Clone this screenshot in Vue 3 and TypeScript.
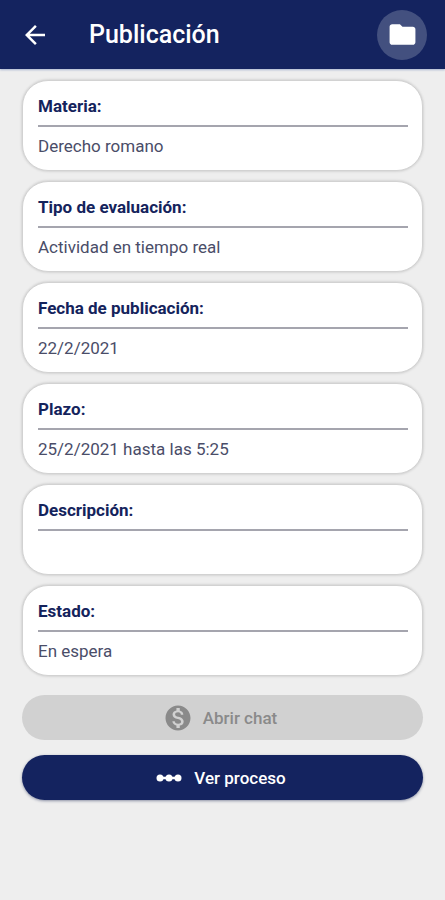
<script setup lang="ts">
interface Field {
  label: string
  value: string
}

const fields: Field[] = [
  { label: 'Materia:', value: 'Derecho romano' },
  { label: 'Tipo de evaluación:', value: 'Actividad en tiempo real' },
  { label: 'Fecha de publicación:', value: '22/2/2021' },
  { label: 'Plazo:', value: '25/2/2021 hasta las 5:25' },
  { label: 'Descripción:', value: '' },
  { label: 'Estado:', value: 'En espera' },
]
</script>

<template>
  <div class="screen">
    <header class="bar">
      <button class="back" type="button" aria-label="Volver">
        <svg viewBox="0 0 24 24" width="30" height="30" aria-hidden="true">
          <path d="M20 11H7.83l5.59-5.59L12 4l-8 8 8 8 1.41-1.41L7.83 13H20v-2z" />
        </svg>
      </button>
      <h1 class="title">Publicación</h1>
      <button class="folder" type="button" aria-label="Archivos">
        <svg viewBox="0 0 24 24" width="31" height="31" aria-hidden="true">
          <path d="M10 4H4c-1.1 0-1.99.9-1.99 2L2 18c0 1.1.9 2 2 2h16c1.1 0 2-.9 2-2V8c0-1.1-.9-2-2-2h-8l-2-2z" />
        </svg>
      </button>
    </header>

    <main class="content">
      <dl class="cards">
        <div v-for="field in fields" :key="field.label" class="card">
          <dt class="label">{{ field.label }}</dt>
          <dd class="value">{{ field.value }}</dd>
        </div>
      </dl>

      <div class="actions">
        <button class="action" type="button" disabled>
          <svg viewBox="0 0 24 24" width="30" height="30" aria-hidden="true">
            <path d="M12 2C6.48 2 2 6.48 2 12s4.48 10 10 10 10-4.48 10-10S17.52 2 12 2zm1.41 16.09V20h-2.67v-1.93c-1.71-.36-3.16-1.46-3.27-3.4h1.96c.1 1.05.82 1.87 2.65 1.87 1.96 0 2.4-.98 2.4-1.59 0-.83-.44-1.61-2.67-2.14-2.48-.6-4.18-1.62-4.18-3.67 0-1.72 1.39-2.84 3.11-3.21V4h2.67v1.95c1.86.45 2.79 1.86 2.85 3.39H14.3c-.05-1.11-.64-1.87-2.22-1.87-1.5 0-2.4.68-2.4 1.64 0 .84.65 1.39 2.67 1.91s4.18 1.39 4.18 3.91c-.01 1.83-1.38 2.83-3.12 3.16z" />
          </svg>
          <span>Abrir chat</span>
        </button>
        <button class="action primary" type="button">
          <svg viewBox="0 0 24 24" width="30" height="30" aria-hidden="true">
            <path d="M4 11h16v2H4z" />
            <circle cx="4.8" cy="12" r="2.8" />
            <circle cx="12" cy="12" r="2.8" />
            <circle cx="19.2" cy="12" r="2.8" />
          </svg>
          <span>Ver proceso</span>
        </button>
      </div>
    </main>
  </div>
</template>

<style>
body {
  background: #eeeeee;
}
</style>

<style scoped>
.screen {
  min-height: 100vh;
  background: #eeeeee;
  color: #14235c;
  font-family: Roboto, sans-serif;
}

svg {
  display: block;
  fill: currentColor;
}

button {
  margin: 0;
  padding: 0;
  border: 0;
  font: inherit;
}

.bar {
  display: flex;
  align-items: center;
  height: 69px;
  padding: 0 18px 0 20px;
  background: #14235f;
  box-shadow: 0 1px 2px #a9b4d0;
  color: #ffffff;
}

.back {
  background: none;
  color: inherit;
}

.title {
  flex: 1;
  margin: 0 0 0 39px;
  font-size: 25px;
  font-weight: 500;
  line-height: 33px;
}

.folder {
  display: grid;
  place-items: center;
  width: 50px;
  height: 50px;
  border-radius: 50%;
  background: #43507f;
  color: inherit;
}

.content {
  padding: 11px 22px 24px;
}

.cards {
  display: grid;
  gap: 10px;
  margin: 0;
}

.card {
  padding: 14px 14px 13px 15px;
  border: 1px solid #d2d2d2;
  border-radius: 26px;
  background: #ffffff;
  box-shadow: 0 0 2px 1px #d6d6d6;
}

.label {
  padding-bottom: 8px;
  border-bottom: 2px solid #a5a5ae;
  font-size: 17px;
  font-weight: 700;
  line-height: 22px;
}

.value {
  min-height: 22px;
  margin: 0;
  padding-top: 8px;
  color: #4a4d68;
  font-size: 17px;
  line-height: 22px;
}

.actions {
  display: grid;
  gap: 15px;
  margin-top: 19px;
}

.action {
  display: flex;
  align-items: center;
  justify-content: center;
  gap: 10px;
  height: 45px;
  padding-right: 5px;
  border-radius: 23px;
  background: #d1d1d1;
  color: #8a8a8a;
  font-size: 17px;
  font-weight: 500;
}

.primary {
  background: #14235f;
  box-shadow: 0 1px 3px #8b90a5;
  color: #ffffff;
}
</style>
